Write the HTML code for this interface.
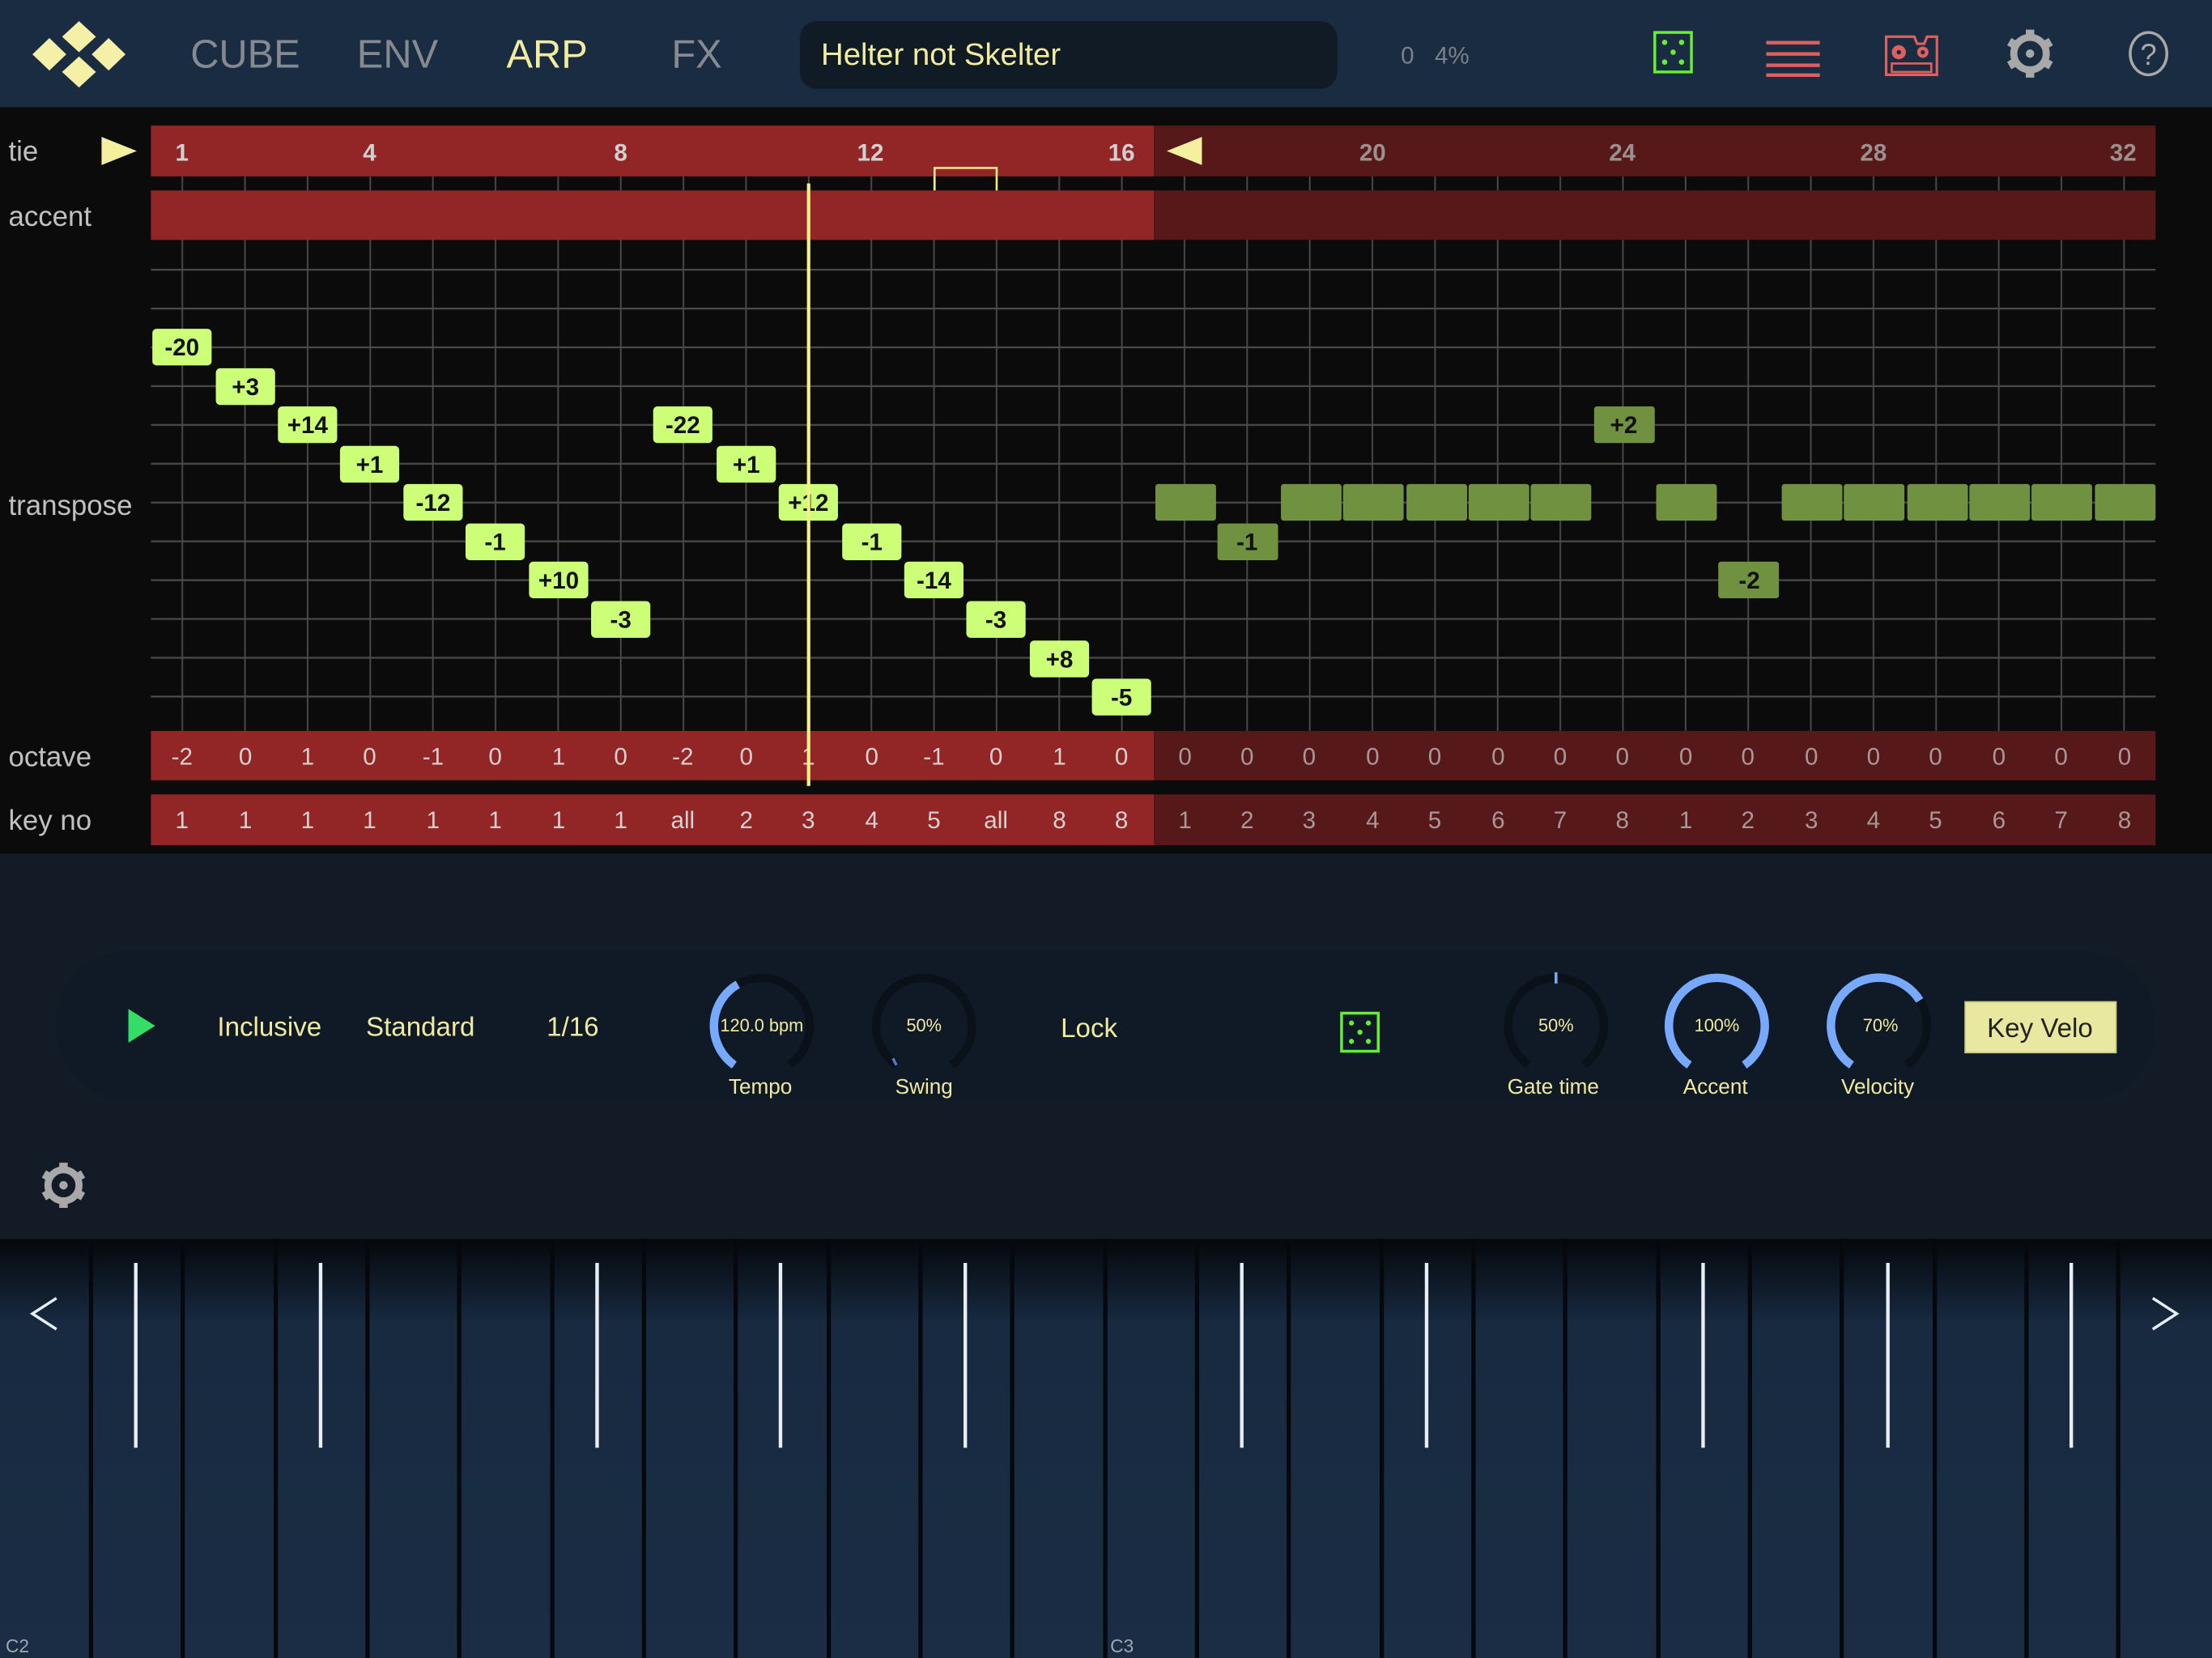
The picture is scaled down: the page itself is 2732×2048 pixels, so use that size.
<!DOCTYPE html>
<html><head><meta charset="utf-8"><style>
html,body{margin:0;padding:0;background:#0b0b0b;overflow:hidden}
svg{display:block}
text{font-family:"Liberation Sans",sans-serif}
</style></head><body>
<svg width="2732" height="2048" viewBox="0 0 1568 1175" preserveAspectRatio="none" xmlns="http://www.w3.org/2000/svg">
<defs>
<pattern id="vl" x="107" y="0" width="44.4" height="10" patternUnits="userSpaceOnUse"><rect x="21.7" y="0" width="1.1" height="10" fill="#4a4a4a"/></pattern>
<pattern id="hl" x="0" y="190.5" width="10" height="27.5" patternUnits="userSpaceOnUse"><rect x="0" y="0" width="10" height="1.3" fill="#4a4a4a"/></pattern>
<linearGradient id="kb" x1="0" y1="0" x2="0" y2="1"><stop offset="0" stop-color="#05080c"/><stop offset="0.2" stop-color="#172a40"/><stop offset="1" stop-color="#1a2d44"/></linearGradient>
</defs>
<rect width="1568" height="1175" fill="#0b0b0b"/>
<rect x="0" y="0" width="1568" height="76" fill="#1a2c42"/>
<rect x="0" y="605" width="1568" height="273" fill="#121b26"/>
<rect x="107" y="125" width="1421" height="393" fill="url(#vl)"/>
<rect x="107" y="188" width="1421" height="310" fill="url(#hl)"/>
<rect x="107" y="89" width="711" height="36" fill="#922626"/>
<rect x="818" y="89" width="710" height="36" fill="#561818"/>
<rect x="107" y="135" width="711" height="35" fill="#922626"/>
<rect x="818" y="135" width="710" height="35" fill="#561818"/>
<rect x="107" y="518" width="711" height="35" fill="#922626"/>
<rect x="818" y="518" width="710" height="35" fill="#561818"/>
<rect x="107" y="563" width="711" height="36" fill="#922626"/>
<rect x="818" y="563" width="710" height="36" fill="#561818"/>
<!-- logo -->
<g fill="#f5f0a8">
<polygon points="56,15 68,26 56,37 44,26"/>
<polygon points="35,27 47,38.5 35,50 23,38.5"/>
<polygon points="77,27 89,38.5 77,50 65,38.5"/>
<polygon points="56,40 68,51 56,62 44,51"/>
</g>
<g font-size="28">
<text x="135" y="48" fill="#858a90">CUBE</text>
<text x="253" y="48" fill="#858a90">ENV</text>
<text x="359" y="48" fill="#f2eca0">ARP</text>
<text x="476" y="48" fill="#858a90">FX</text>
</g>
<rect x="567" y="15" width="381" height="48" rx="12" fill="#101b26"/>
<text x="582" y="46" font-size="22" fill="#f2eca0">Helter not Skelter</text>
<text x="993" y="45" font-size="17" fill="#7a8088">0</text>
<text x="1017" y="45" font-size="17" fill="#7a8088">4%</text>
<rect x="1173" y="23" width="26" height="28" fill="none" stroke="#66ee33" stroke-width="2"/>
<g fill="#66ee33"><circle cx="1180" cy="30" r="1.9"/><circle cx="1192" cy="30" r="1.9"/><circle cx="1186" cy="37" r="1.9"/><circle cx="1180" cy="44" r="1.9"/><circle cx="1192" cy="44" r="1.9"/></g>
<g fill="#e06060"><rect x="1252" y="29" width="38" height="2.5"/><rect x="1252" y="37" width="38" height="2.5"/><rect x="1252" y="45" width="38" height="2.5"/><rect x="1252" y="53" width="38" height="2.5" transform="translate(0,-1)"/></g>
<path d="M1337 26 H1357 L1359 31 H1364 L1366 26 H1373 V53 H1337 Z" fill="none" stroke="#e06060" stroke-width="1.8"/>
<circle cx="1346" cy="37" r="5" fill="#e06060"/><circle cx="1346" cy="37" r="1.6" fill="#1a2c42"/>
<circle cx="1363" cy="37" r="4" fill="#e06060"/><circle cx="1363" cy="37" r="1.5" fill="#1a2c42"/>
<rect x="1341" y="45" width="28" height="6" fill="none" stroke="#e06060" stroke-width="1.5"/>
<g transform="translate(1439,38)">
<circle r="11.5" fill="none" stroke="#a8a8a8" stroke-width="5"/>
<g fill="#a8a8a8"><rect x="-3" y="-17" width="6" height="6"/><rect x="-3" y="11" width="6" height="6"/><rect x="-3" y="-17" width="6" height="6" transform="rotate(60)"/><rect x="-3" y="11" width="6" height="6" transform="rotate(60)"/><rect x="-3" y="-17" width="6" height="6" transform="rotate(120)"/><rect x="-3" y="11" width="6" height="6" transform="rotate(120)"/></g>
<circle r="3" fill="#a8a8a8"/>
</g>
<ellipse cx="1523" cy="38" rx="13" ry="15" fill="none" stroke="#a8a8a8" stroke-width="2"/>
<text x="1523" y="46" font-size="21" fill="#a8a8a8" text-anchor="middle">?</text>
<g font-size="20" fill="#c0c0c0">
<text x="6" y="114">tie</text>
<text x="6" y="160">accent</text>
<text x="6" y="365">transpose</text>
<text x="6" y="543">octave</text>
<text x="6" y="588">key no</text>
</g>
<polygon points="72,97 97,107 72,117" fill="#f5f0a0"/>
<polygon points="852,97 827,107 852,117" fill="#f5f0a0"/>
<g font-size="17" font-weight="bold" text-anchor="middle">
<g fill="#d0d0d0">
<text x="129" y="114">1</text><text x="262" y="114">4</text><text x="440" y="114">8</text><text x="617" y="114">12</text><text x="795" y="114">16</text>
</g>
<g fill="#9a9090">
<text x="973" y="114">20</text><text x="1150" y="114">24</text><text x="1328" y="114">28</text><text x="1505" y="114">32</text>
</g>
</g>
<path d="M662.5 135 V119 H706.5 V135" fill="none" stroke="#f0e68c" stroke-width="1.5"/>
<g fill="#ccff77">
<rect x="108" y="233" width="42" height="26" rx="3"/>
<rect x="153" y="261" width="42" height="26" rx="3"/>
<rect x="197" y="288" width="42" height="26" rx="3"/>
<rect x="241" y="316" width="42" height="26" rx="3"/>
<rect x="286" y="343" width="42" height="26" rx="3"/>
<rect x="330" y="371" width="42" height="26" rx="3"/>
<rect x="375" y="398" width="42" height="26" rx="3"/>
<rect x="419" y="426" width="42" height="26" rx="3"/>
<rect x="463" y="288" width="42" height="26" rx="3"/>
<rect x="508" y="316" width="42" height="26" rx="3"/>
<rect x="552" y="343" width="42" height="26" rx="3"/>
<rect x="597" y="371" width="42" height="26" rx="3"/>
<rect x="641" y="398" width="42" height="26" rx="3"/>
<rect x="685" y="426" width="42" height="26" rx="3"/>
<rect x="730" y="454" width="42" height="26" rx="3"/>
<rect x="774" y="481" width="42" height="26" rx="3"/>
</g>
<g font-size="17" font-weight="bold" fill="#111" text-anchor="middle">
<text x="129" y="252">-20</text><text x="174" y="280">+3</text><text x="218" y="307">+14</text><text x="262" y="335">+1</text>
<text x="307" y="362">-12</text><text x="351" y="390">-1</text><text x="396" y="417">+10</text><text x="440" y="445">-3</text>
<text x="484" y="307">-22</text><text x="529" y="335">+1</text><text x="573" y="362">+12</text><text x="618" y="390">-1</text>
<text x="662" y="417">-14</text><text x="706" y="445">-3</text><text x="751" y="473">+8</text><text x="795" y="500">-5</text>
</g>
<g fill="#6f9140">
<rect x="819" y="343" width="43" height="26" rx="2"/>
<rect x="863" y="371" width="43" height="26" rx="2"/>
<rect x="908" y="343" width="43" height="26" rx="2"/>
<rect x="952" y="343" width="43" height="26" rx="2"/>
<rect x="997" y="343" width="43" height="26" rx="2"/>
<rect x="1041" y="343" width="43" height="26" rx="2"/>
<rect x="1085" y="343" width="43" height="26" rx="2"/>
<rect x="1130" y="288" width="43" height="26" rx="2"/>
<rect x="1174" y="343" width="43" height="26" rx="2"/>
<rect x="1218" y="398" width="43" height="26" rx="2"/>
<rect x="1263" y="343" width="43" height="26" rx="2"/>
<rect x="1307" y="343" width="43" height="26" rx="2"/>
<rect x="1352" y="343" width="43" height="26" rx="2"/>
<rect x="1396" y="343" width="43" height="26" rx="2"/>
<rect x="1440" y="343" width="43" height="26" rx="2"/>
<rect x="1485" y="343" width="43" height="26" rx="2"/>
</g>
<g font-size="17" font-weight="bold" fill="#111" text-anchor="middle">
<text x="884" y="390">-1</text><text x="1151" y="307">+2</text><text x="1240" y="417">-2</text>
</g>
<g font-size="17" text-anchor="middle" fill="#d8d0d0">
<text x="129" y="542">-2</text><text x="174" y="542">0</text><text x="218" y="542">1</text><text x="262" y="542">0</text><text x="307" y="542">-1</text><text x="351" y="542">0</text><text x="396" y="542">1</text><text x="440" y="542">0</text><text x="484" y="542">-2</text><text x="529" y="542">0</text><text x="573" y="542">1</text><text x="618" y="542">0</text><text x="662" y="542">-1</text><text x="706" y="542">0</text><text x="751" y="542">1</text><text x="795" y="542">0</text>
<text x="129" y="587">1</text><text x="174" y="587">1</text><text x="218" y="587">1</text><text x="262" y="587">1</text><text x="307" y="587">1</text><text x="351" y="587">1</text><text x="396" y="587">1</text><text x="440" y="587">1</text><text x="484" y="587">all</text><text x="529" y="587">2</text><text x="573" y="587">3</text><text x="618" y="587">4</text><text x="662" y="587">5</text><text x="706" y="587">all</text><text x="751" y="587">8</text><text x="795" y="587">8</text>
</g>
<g font-size="17" text-anchor="middle" fill="#a89898">
<text x="840" y="542">0</text><text x="884" y="542">0</text><text x="928" y="542">0</text><text x="973" y="542">0</text><text x="1017" y="542">0</text><text x="1062" y="542">0</text><text x="1106" y="542">0</text><text x="1150" y="542">0</text><text x="1195" y="542">0</text><text x="1239" y="542">0</text><text x="1284" y="542">0</text><text x="1328" y="542">0</text><text x="1372" y="542">0</text><text x="1417" y="542">0</text><text x="1461" y="542">0</text><text x="1506" y="542">0</text>
<text x="840" y="587">1</text><text x="884" y="587">2</text><text x="928" y="587">3</text><text x="973" y="587">4</text><text x="1017" y="587">5</text><text x="1062" y="587">6</text><text x="1106" y="587">7</text><text x="1150" y="587">8</text><text x="1195" y="587">1</text><text x="1239" y="587">2</text><text x="1284" y="587">3</text><text x="1328" y="587">4</text><text x="1372" y="587">5</text><text x="1417" y="587">6</text><text x="1461" y="587">7</text><text x="1506" y="587">8</text>
</g>
<rect x="572" y="130" width="2.4" height="427" fill="#f5f08a"/>
<rect x="40" y="674" width="1488" height="106" rx="50" fill="#101a26"/>
<polygon points="91,715 110,727 91,739" fill="#33dd66"/>
<g font-size="19" fill="#f0eaa0" text-anchor="middle">
<text x="191" y="734">Inclusive</text><text x="298" y="734">Standard</text><text x="406" y="734">1/16</text><text x="772" y="735">Lock</text>
</g>
<rect x="951" y="718" width="26" height="27" fill="none" stroke="#66ee33" stroke-width="2"/>
<g fill="#66ee33"><circle cx="958" cy="725" r="1.8"/><circle cx="970" cy="725" r="1.8"/><circle cx="964" cy="731.5" r="1.8"/><circle cx="958" cy="738" r="1.8"/><circle cx="970" cy="738" r="1.8"/></g>
<g fill="none" stroke-width="6">
<path d="M520.5 754.8 A34 34 0 1 1 559.5 754.8" stroke="#0a1119"/>
<path d="M520.5 754.8 A34 34 0 0 1 523 697.6" stroke="#77aaff"/>
<path d="M635.5 754.8 A34 34 0 1 1 674.5 754.8" stroke="#0a1119"/>
<path d="M635.5 754.8 A34 34 0 0 1 633 750" stroke="#5577bb" stroke-width="2"/>
<path d="M1083.5 754.8 A34 34 0 1 1 1122.5 754.8" stroke="#0a1119"/>
<path d="M1197.5 754.8 A34 34 0 1 1 1236.5 754.8" stroke="#77aaff"/>
<path d="M1312.5 754.8 A34 34 0 1 1 1351.5 754.8" stroke="#0a1119"/>
<path d="M1312.5 754.8 A34 34 0 1 1 1360.8 709" stroke="#77aaff"/>
</g>
<rect x="1102" y="689" width="2" height="8" fill="#77aaff"/>
<g font-size="12.5" fill="#f0eaa0" text-anchor="middle">
<text x="540" y="731">120.0 bpm</text><text x="655" y="731">50%</text><text x="1103" y="731">50%</text><text x="1217" y="731">100%</text><text x="1333" y="731">70%</text>
</g>
<g font-size="15" fill="#f0eaa0" text-anchor="middle">
<text x="539" y="775">Tempo</text><text x="655" y="775">Swing</text><text x="1101" y="775">Gate time</text><text x="1216" y="775">Accent</text><text x="1331" y="775">Velocity</text>
</g>
<rect x="1393" y="710" width="107" height="36" fill="#e8e8a0" stroke="#c8c880" stroke-width="1"/>
<text x="1446" y="735" font-size="19" fill="#222" text-anchor="middle">Key Velo</text>
<g transform="translate(45,840)">
<circle r="11" fill="none" stroke="#a8a8a8" stroke-width="5"/>
<g fill="#a8a8a8"><rect x="-3" y="-16" width="6" height="6"/><rect x="-3" y="10" width="6" height="6"/><rect x="-3" y="-16" width="6" height="6" transform="rotate(60)"/><rect x="-3" y="10" width="6" height="6" transform="rotate(60)"/><rect x="-3" y="-16" width="6" height="6" transform="rotate(120)"/><rect x="-3" y="10" width="6" height="6" transform="rotate(120)"/></g>
<circle r="3" fill="#a8a8a8"/>
</g>
<rect x="0" y="878" width="1568" height="297" fill="url(#kb)"/>
<g fill="#05080c">
<rect x="63" y="878" width="3" height="297"/><rect x="128" y="878" width="3" height="297"/><rect x="194" y="878" width="3" height="297"/><rect x="259" y="878" width="3" height="297"/><rect x="324" y="878" width="3" height="297"/><rect x="390" y="878" width="3" height="297"/><rect x="455" y="878" width="3" height="297"/><rect x="520" y="878" width="3" height="297"/><rect x="586" y="878" width="3" height="297"/><rect x="651" y="878" width="3" height="297"/><rect x="716" y="878" width="3" height="297"/><rect x="782" y="878" width="3" height="297"/><rect x="847" y="878" width="3" height="297"/><rect x="912" y="878" width="3" height="297"/><rect x="978" y="878" width="3" height="297"/><rect x="1043" y="878" width="3" height="297"/><rect x="1108" y="878" width="3" height="297"/><rect x="1174" y="878" width="3" height="297"/><rect x="1239" y="878" width="3" height="297"/><rect x="1304" y="878" width="3" height="297"/><rect x="1370" y="878" width="3" height="297"/><rect x="1435" y="878" width="3" height="297"/><rect x="1500" y="878" width="3" height="297"/>
</g>
<g fill="#e8eef5">
<rect x="95" y="895" width="2.5" height="131"/><rect x="226" y="895" width="2.5" height="131"/><rect x="422" y="895" width="2.5" height="131"/><rect x="552" y="895" width="2.5" height="131"/><rect x="683" y="895" width="2.5" height="131"/><rect x="879" y="895" width="2.5" height="131"/><rect x="1010" y="895" width="2.5" height="131"/><rect x="1206" y="895" width="2.5" height="131"/><rect x="1337" y="895" width="2.5" height="131"/><rect x="1467" y="895" width="2.5" height="131"/>
</g>
<path d="M40 920 L23 931 L40 942" fill="none" stroke="#e8eef5" stroke-width="2"/>
<path d="M1526 920 L1543 931 L1526 942" fill="none" stroke="#e8eef5" stroke-width="2"/>
<text x="4" y="1171" font-size="13" fill="#a0a8b0">C2</text>
<text x="787" y="1171" font-size="13" fill="#a0a8b0">C3</text>
</svg>
</body></html>
